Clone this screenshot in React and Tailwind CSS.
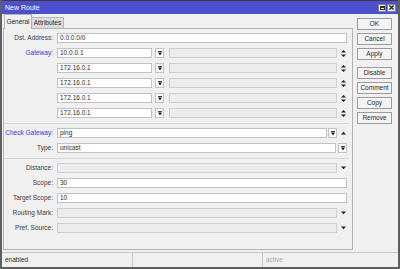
import React from "react";

// small glyphs used by WinBox style fields
const DropIcon = () => (
  <svg width="4" height="5" viewBox="0 0 4 5">
    <rect x="0" y="0" width="4" height="0.8" fill="#111" />
    <polygon points="0,1.6 4,1.6 2,4.6" fill="#111" />
  </svg>
);

const UpDown = () => (
  <svg width="5" height="7" viewBox="0 0 5 7">
    <polygon points="2.5,0 5,2.6 0,2.6" fill="#222" />
    <polygon points="0,4.4 5,4.4 2.5,7" fill="#222" />
  </svg>
);

const Down = () => (
  <svg width="5" height="4" viewBox="0 0 5 4">
    <polygon points="0,0.5 5,0.5 2.5,3.3" fill="#222" />
  </svg>
);

const Up = () => (
  <svg width="5" height="4" viewBox="0 0 5 4">
    <polygon points="2.5,0.7 5,3.5 0,3.5" fill="#222" />
  </svg>
);

const Label = ({ children, blue }) => (
  <div
    className={`w-[50px] shrink-0 text-right pr-px ${
      blue ? "text-[#3838d4]" : "text-[#3c3c3c]"
    }`}
  >
    {children}
  </div>
);

const Box = ({ children, off, className = "" }) => (
  <div
    className={`h-[10px] border flex items-center px-[2px] text-[#2a2a2a] ${
      off ? "bg-[#ececec] border-[#cfcfcf]" : "bg-white border-[#c2c2c2]"
    } ${className}`}
  >
    {children}
  </div>
);

const DropBtn = ({ className = "" }) => (
  <div
    className={`w-[9px] h-[10px] shrink-0 bg-white border border-[#c2c2c2] flex items-center justify-center ${className}`}
  >
    <DropIcon />
  </div>
);

const Tail = ({ children }) => (
  <div className="w-[10px] shrink-0 flex items-center justify-end pr-px">
    {children}
  </div>
);

const Row = ({ children }) => (
  <div className="flex items-center h-[10px]">{children}</div>
);

const Sep = () => <div className="h-0 border-t border-[#d8d8d8] -mb-px mr-[-2px]" />;

function GatewayRow({ label, value }) {
  return (
    <Row>
      <Label blue={!!label}>{label ? label : ""}</Label>
      <Box className="w-[95px] ml-[3px]">{value}</Box>
      <DropBtn className="ml-[3px]" />
      <Box off className="flex-1 ml-[5px]" />
      <Tail>
        <UpDown />
      </Tail>
    </Row>
  );
}

const Btn = ({ children }) => (
  <div className="w-[35px] h-[12px] bg-[#f4f4f4] border border-[#9c9c9c] flex items-center justify-center text-[#2a2a2a]">
    {children}
  </div>
);

export default function App() {
  const gateways = ["172.16.0.1", "172.16.0.1", "172.16.0.1", "172.16.0.1"];

  return (
    <div
      className="w-[400px] h-[269px] bg-[#f0f0f0] border-x-2 border-b-2 border-[#5f5f5f] flex flex-col text-[6.5px] leading-none overflow-hidden"
      style={{ fontFamily: '"Liberation Sans", Arial, sans-serif' }}
    >
      {/* title bar */}
      <div className="h-[14px] shrink-0 bg-[#4c50cc] border-t border-[#3a3a3a] -mx-[2px] flex items-center pl-[5px] pr-[4px]">
        <span className="text-white text-[7px] flex-1">New Route</span>
        <div className="flex gap-px">
          <div className="w-[8px] h-[8px] bg-[#e8e8e8] border border-[#888] flex items-center justify-center">
            <div className="w-[5px] h-[4px] border border-[#333] border-t-2" />
          </div>
          <div className="w-[9px] h-[8px] bg-[#e8e8e8] border border-[#888] flex items-center justify-center">
            <svg width="5" height="5" viewBox="0 0 5 5">
              <path d="M0.5 0.5 L4.5 4.5 M4.5 0.5 L0.5 4.5" stroke="#222" strokeWidth="1.3" />
            </svg>
          </div>
        </div>
      </div>

      {/* body */}
      <div className="flex flex-1 min-h-0">
        <div className="w-[350px] ml-px flex flex-col pb-[2px]">
          {/* tabs */}
          <div className="h-[14px] flex items-end pl-px">
            <div className="h-[15px] w-[28px] bg-[#f0f0f0] border border-b-0 border-[#b4b4b4] flex items-center justify-center text-[#2a2a2a] relative z-10 -mb-px">
              General
            </div>
            <div className="h-[11px] w-[32px] bg-[#dcdcdc] border border-l-0 border-b-0 border-[#b4b4b4] flex items-center justify-center text-[#2a2a2a]">
              Attributes
            </div>
          </div>

          {/* panel */}
          <div className="flex-1 border border-[#b4b4b4] bg-[#f0f0f0] pt-[4px] pr-[5px] flex flex-col gap-[5px]">
            <Row>
              <Label>Dst. Address:</Label>
              <Box className="flex-1 ml-[3px]">0.0.0.0/0</Box>
            </Row>

            <Row>
              <Label blue>Gateway:</Label>
              <Box className="w-[95px] ml-[3px]">10.0.0.1</Box>
              <DropBtn className="ml-[3px]" />
              <Box off className="flex-1 ml-[5px]" />
              <Tail>
                <UpDown />
              </Tail>
            </Row>
            {gateways.map((g, i) => (
              <GatewayRow key={i} value={g} />
            ))}

            <Sep />

            <Row>
              <Label blue>Check Gateway:</Label>
              <Box className="flex-1 ml-[3px]">ping</Box>
              <DropBtn className="ml-px" />
              <Tail>
                <Up />
              </Tail>
            </Row>
            <Row>
              <Label>Type:</Label>
              <Box className="flex-1 ml-[3px]">unicast</Box>
              <DropBtn className="ml-[2px]" />
            </Row>

            <Sep />

            <Row>
              <Label>Distance:</Label>
              <Box off className="flex-1 ml-[3px]" />
              <Tail>
                <Down />
              </Tail>
            </Row>
            <Row>
              <Label>Scope:</Label>
              <Box className="flex-1 ml-[3px]">30</Box>
            </Row>
            <Row>
              <Label>Target Scope:</Label>
              <Box className="flex-1 ml-[3px]">10</Box>
            </Row>
            <Row>
              <Label>Routing Mark:</Label>
              <Box off className="flex-1 ml-[3px]" />
              <Tail>
                <Down />
              </Tail>
            </Row>
            <Row>
              <Label>Pref. Source:</Label>
              <Box off className="flex-1 ml-[3px]" />
              <Tail>
                <Down />
              </Tail>
            </Row>
          </div>
        </div>

        {/* action buttons */}
        <div className="flex-1 pl-[4px] pt-[4px] flex flex-col">
          <div className="flex flex-col gap-[3px]">
            <Btn>OK</Btn>
            <Btn>Cancel</Btn>
            <Btn>Apply</Btn>
          </div>
          <div className="flex flex-col gap-[3px] mt-[7px]">
            <Btn>Disable</Btn>
            <Btn>Comment</Btn>
            <Btn>Copy</Btn>
            <Btn>Remove</Btn>
          </div>
        </div>
      </div>

      {/* status bar */}
      <div className="h-[15px] shrink-0 border-t border-[#c8c8c8] flex">
        <div className="w-[131px] border-r border-[#c8c8c8] flex items-center pl-[3px] text-[#2a2a2a]">
          enabled
        </div>
        <div className="w-[130px] border-r border-[#c8c8c8]" />
        <div className="flex-1 flex items-center pl-[3px] text-[#aaa]">active</div>
      </div>
    </div>
  );
}
